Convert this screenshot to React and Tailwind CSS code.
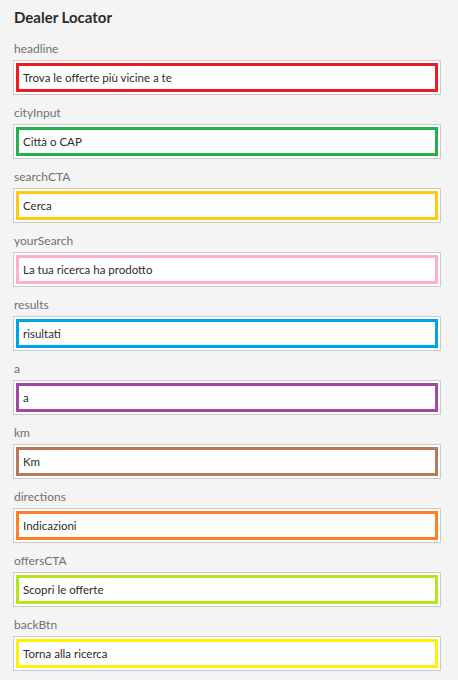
import React from "react";

const fields = [
  { label: "headline", value: "Trova le offerte più vicine a te", border: "border-[#ed1c24]" },
  { label: "cityInput", value: "Città o CAP", border: "border-[#22b14c]" },
  { label: "searchCTA", value: "Cerca", border: "border-[#ffc90e]" },
  { label: "yourSearch", value: "La tua ricerca ha prodotto", border: "border-[#ffaec9]" },
  { label: "results", value: "risultati", border: "border-[#00a2e8]" },
  { label: "a", value: "a", border: "border-[#a349a4]" },
  { label: "km", value: "Km", border: "border-[#b97a57]" },
  { label: "directions", value: "Indicazioni", border: "border-[#ff7f27]" },
  { label: "offersCTA", value: "Scopri le offerte", border: "border-[#b5e61d]" },
  { label: "backBtn", value: "Torna alla ricerca", border: "border-[#fff200]" },
];

export default function App() {
  return (
    <div
      className="min-h-screen w-full bg-[#f4f4f4] pt-[7px] pl-[13px] pr-[17px]"
      style={{ fontFamily: "Lato, 'Noto Sans', sans-serif" }}
    >
      <h1 className="text-[15px] leading-[20px] font-bold text-[#2c2c2c] pl-[1px]">Dealer Locator</h1>
      <div className="mt-[13px] flex flex-col gap-[9px]">
        {fields.map((f) => (
          <div key={f.label} className="flex flex-col">
            <div className="text-[12px] leading-[18px] text-[#707070] pl-[1px] mb-[2px]">{f.label}</div>
            <div className="h-[35px] border border-[#cacaca] bg-white p-[2px]">
              <div className={`h-full border-[3px] ${f.border} pl-[4px] flex items-center text-[11.5px] text-[#2c2c2c]`}>
                {f.value}
              </div>
            </div>
          </div>
        ))}
      </div>
    </div>
  );
}
